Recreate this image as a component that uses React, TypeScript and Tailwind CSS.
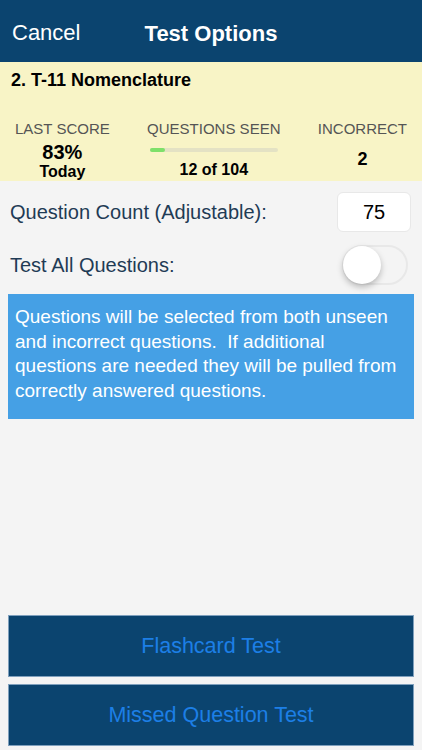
import React from 'react';

const font = { fontFamily: '"Liberation Sans", Arial, sans-serif' };

const Stat: React.FC<{ label: string; children: React.ReactNode }> = ({ label, children }) => (
  <div className="flex flex-col items-center">
    <span className="text-[15px] leading-[18px] text-[#555555]">{label}</span>
    {children}
  </div>
);

export default function App() {
  return (
    <div className="w-[422px] h-[750px] bg-[#f4f4f4] flex flex-col overflow-hidden" style={font}>
      {/* nav bar */}
      <div className="relative h-[62px] bg-[#0b446f] flex items-center justify-center shrink-0">
        <span className="absolute left-[12px] top-[20px] text-[22px] leading-[26px] text-white">Cancel</span>
        <span className="text-[22px] leading-[26px] font-bold text-white mt-[5px]">Test Options</span>
      </div>

      {/* summary */}
      <div className="h-[119px] bg-[#f8f4c6] shrink-0 flex flex-col">
        <div className="px-[11px] pt-[8px] text-[18px] leading-[20px] font-bold text-black">2. T-11 Nomenclature</div>
        <div className="flex justify-between pl-[15px] pr-[15px] mt-[30px]">
          <Stat label="LAST SCORE">
            <span className="text-[20px] leading-[22px] font-bold text-black mt-[3px]">83%</span>
            <span className="text-[16px] leading-[18px] font-bold text-black">Today</span>
          </Stat>
          <Stat label="QUESTIONS SEEN">
            <div className="w-[128px] h-[4px] bg-[#e4e2c4] rounded-full mt-[10px] flex">
              <div className="w-[15px] h-full bg-[#7ee06a] rounded-full" />
            </div>
            <span className="text-[16px] leading-[18px] font-bold text-black mt-[9px]">12 of 104</span>
          </Stat>
          <Stat label="INCORRECT">
            <span className="text-[18px] leading-[20px] font-bold text-black mt-[11px]">2</span>
          </Stat>
        </div>
      </div>

      {/* options */}
      <div className="flex items-center justify-between pl-[10px] pr-[11px] mt-[11px]">
        <span className="text-[20px] leading-[24px] text-[#1f3b55]">Question Count (Adjustable):</span>
        <div className="w-[74px] h-[40px] bg-white rounded-[6px] border border-[#e8e8e8] flex items-center justify-center text-[20px] text-black">
          75
        </div>
      </div>
      <div className="flex items-center justify-between pl-[10px] pr-[14px] mt-[13px]">
        <span className="text-[20px] leading-[24px] text-[#1f3b55]">Test All Questions:</span>
        <div className="relative w-[66px] h-[40px] rounded-full bg-[#f4f4f4] border-2 border-[#e8e8e8]">
          <div className="absolute left-[-1px] top-[-1px] w-[38px] h-[38px] rounded-full bg-white shadow-[0_3px_6px_rgba(0,0,0,0.25)]" />
        </div>
      </div>

      <div className="mx-[8px] mt-[9px] h-[125px] bg-[#45a0e5] px-[7px] pt-[11px] text-[19px] leading-[24.5px] text-white">
        Questions will be selected from both unseen and incorrect questions.&nbsp; If additional questions are needed they will be pulled from correctly answered questions.
      </div>

      <div className="flex-1" />

      <div className="flex flex-col gap-[7px] px-[8px] pb-[4px]">
        <button className="h-[62px] bg-[#0b446f] border border-[#7fa0bd] text-[21.5px] text-[#1d7fe6] flex items-center justify-center" style={font}>
          Flashcard Test
        </button>
        <button className="h-[62px] bg-[#0b446f] border border-[#7fa0bd] text-[21.5px] text-[#1d7fe6] flex items-center justify-center" style={font}>
          Missed Question Test
        </button>
      </div>
    </div>
  );
}
